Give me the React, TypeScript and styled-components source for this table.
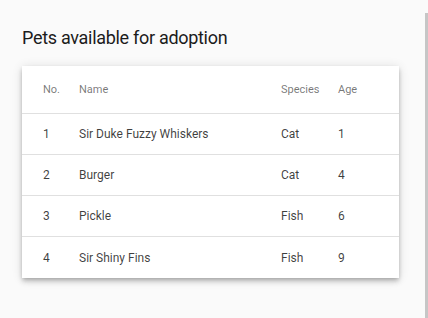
import React from 'react';
import styled, { createGlobalStyle } from 'styled-components';

const GlobalStyle = createGlobalStyle`
  html, body {
    margin: 0;
    padding: 0;
    background: #fafafa;
    font-family: Roboto, "Liberation Sans", sans-serif;
  }
`;

const Page = styled.div`
  display: flex;
  height: 318px;
  overflow: hidden;
`;

const Main = styled.main`
  flex: 1;
  padding: 27px 0 0 22px;
`;

const EdgeBar = styled.div`
  width: 3px;
  margin-top: 13px;
  background: #c6c6c6;
`;

const Title = styled.h1`
  margin: 0 0 17px;
  font-size: 18px;
  line-height: 22px;
  font-weight: 400;
  letter-spacing: -0.3px;
  color: #1c1c1c;
`;

const Card = styled.div`
  width: 377px;
  background: #fff;
  box-shadow: 0 2px 4px -1px rgba(0, 0, 0, 0.2), 0 4px 5px 0 rgba(0, 0, 0, 0.14),
    0 1px 10px 0 rgba(0, 0, 0, 0.12);
`;

const Table = styled.table`
  width: 100%;
  border-collapse: separate;
  border-spacing: 0;
  table-layout: fixed;
`;

const HeadCell = styled.th<{ $w?: number; $first?: boolean }>`
  box-sizing: border-box;
  width: ${(p) => (p.$w ? `${p.$w}px` : 'auto')};
  height: 48px;
  padding: 0 0 0 ${(p) => (p.$first ? '21px' : '0')};
  text-align: left;
  font-size: 11px;
  font-weight: 400;
  color: rgba(0, 0, 0, 0.54);
  border-bottom: 1px solid #e0e0e0;
`;

const Cell = styled.td<{ $first?: boolean; $last?: boolean }>`
  box-sizing: border-box;
  height: 41px;
  padding: 0 0 0 ${(p) => (p.$first ? '21px' : '0')};
  font-size: 12px;
  color: rgba(0, 0, 0, 0.76);
  border-bottom: ${(p) => (p.$last ? 'none' : '1px solid #e0e0e0')};
`;

const pets = [
  { no: 1, name: 'Sir Duke Fuzzy Whiskers', species: 'Cat', age: 1 },
  { no: 2, name: 'Burger', species: 'Cat', age: 4 },
  { no: 3, name: 'Pickle', species: 'Fish', age: 6 },
  { no: 4, name: 'Sir Shiny Fins', species: 'Fish', age: 9 },
];

function App() {
  return (
    <Page>
      <GlobalStyle />
      <Main>
        <Title>Pets available for adoption</Title>
        <Card>
          <Table>
            <thead>
              <tr>
                <HeadCell $first $w={57}>No.</HeadCell>
                <HeadCell $w={202}>Name</HeadCell>
                <HeadCell $w={57}>Species</HeadCell>
                <HeadCell>Age</HeadCell>
              </tr>
            </thead>
            <tbody>
              {pets.map((pet, i) => {
                const last = i === pets.length - 1;
                return (
                  <tr key={pet.no}>
                    <Cell $first $last={last}>{pet.no}</Cell>
                    <Cell $last={last}>{pet.name}</Cell>
                    <Cell $last={last}>{pet.species}</Cell>
                    <Cell $last={last}>{pet.age}</Cell>
                  </tr>
                );
              })}
            </tbody>
          </Table>
        </Card>
      </Main>
      <EdgeBar />
    </Page>
  );
}

export default App;
